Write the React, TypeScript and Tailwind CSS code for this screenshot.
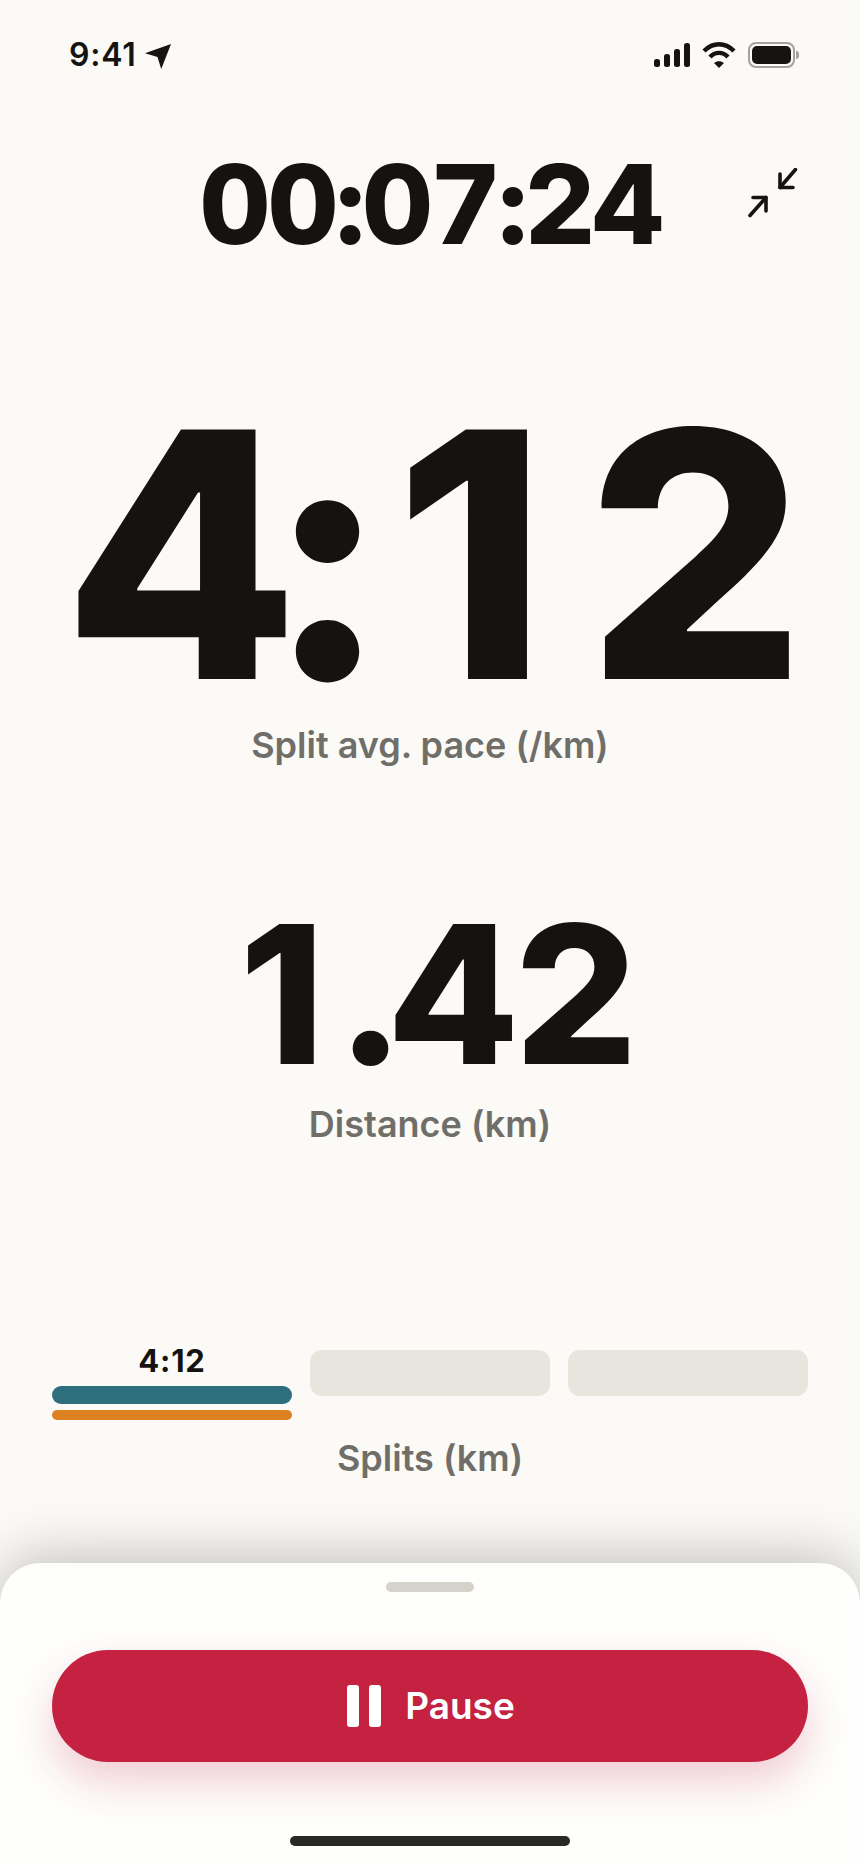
// App.tsx
import React from 'react';

const font = { inter: 'font-["Inter",sans-serif]' };

function StatusBar() {
  return (
    <div className="flex h-[46px] items-center justify-between pl-[69px] pr-[61px] mt-[32px]">
      <div className="flex items-center gap-[8px]">
        <span className="text-[32px] leading-[46px] font-semibold text-[#151412] tracking-[0.8px]">9:41</span>
        <svg width="26" height="26" viewBox="0 0 24 24" className="mt-[1px]">
          <path d="M24 1 L15 24 L11.5 13 L0 9.5 Z" fill="#151412" />
        </svg>
      </div>
      <div className="flex items-center gap-[12px]">
        <svg width="37" height="24" viewBox="0 0 37 24" fill="#151412">
          <rect x="1" y="16" width="6" height="8" rx="2.5" />
          <rect x="11" y="11" width="6" height="13" rx="2.5" />
          <rect x="21" y="6" width="6" height="18" rx="2.5" />
          <rect x="31" y="0" width="6" height="24" rx="2.5" />
        </svg>
        <svg width="34" height="26" viewBox="0 0 34 26" fill="none" stroke="#151412" strokeWidth="4.4">
          <path d="M2 9 C11 0 23 0 32 9" />
          <path d="M8 15 C13 9.500 21 9.500 26 15" />
          <path d="M12 21 L17 26 L22 21 C19 18.500 15 18.500 12 21 Z" fill="#151412" stroke="none" />
        </svg>
        <div className="flex items-center">
          <div className="h-[26px] w-[47px] rounded-[8px] border-2 border-[#a3a29e] p-[2px]">
            <div className="h-full w-full rounded-[5px] bg-[#151412]" />
          </div>
          <div className="ml-[1px] h-[8px] w-[3px] rounded-r-full bg-[#a3a29e]" />
        </div>
      </div>
    </div>
  );
}

function CollapseIcon() {
  return (
    <svg width="50" height="50" viewBox="0 0 50 50" fill="none" stroke="#151412" strokeWidth="3.6" strokeLinecap="round" strokeLinejoin="round">
      <path d="M47.500 1.500 L32 19.500" />
      <path d="M32 6 V19.500 H45" />
      <path d="M2 47.500 L18 29.500" />
      <path d="M5 29.500 H18 V43" />
    </svg>
  );
}

function Metric({ children, label, valueClass, labelClass }: { children: React.ReactNode; label: string; valueClass: string; labelClass: string }) {
  return (
    <div className="flex flex-col items-center">
      <div className={`font-extrabold text-[#141310] ${valueClass}`}>{children}</div>
      <div className={`text-[36px] leading-[44px] font-semibold text-[#6f6e69] ${labelClass}`}>{label}</div>
    </div>
  );
}

export default function App() {
  return (
    <div className={`relative flex h-[1864px] w-[860px] flex-col overflow-hidden bg-[#fbfaf6] ${font.inter}`}>
      <StatusBar />

      <div className="mt-[76px] grid grid-cols-[1fr_auto_1fr]">
        <div />
        <div className="text-[110px] leading-[100px] font-extrabold tabular-nums tracking-[-3px] text-[#141310]">00:07:24</div>
        <div className="flex justify-end pr-[62px] pt-[14px]">
          <CollapseIcon />
        </div>
      </div>

      {/* digits are spaced by hand, the reference has monospaced figures with a plain 1 */}
      <Metric
        label="Split avg. pace (/km)"
        valueClass="mt-[141px] text-[343px] leading-[320px] tracking-[-8px]"
        labelClass="mt-[8px]"
      >
        <span className="mr-[-24px]">4</span>
        <span className="mr-[15px]">:</span>
        <span className="mr-[48px]">1</span>
        2
      </Metric>
      <Metric
        label="Distance (km)"
        valueClass="mt-[132px] pl-[12px] text-[193px] leading-[190px] tracking-[-5px]"
        labelClass="mt-[13px]"
      >
        <span className="mr-[17px]">1</span>
        <span className="mr-[-13px]">.</span>
        <span className="mr-[0px]">4</span>
        2
      </Metric>

      <div className="mt-[204px] grid grid-cols-3 gap-[18px] px-[52px]">
        <div className="flex flex-col">
          <div className="text-center text-[31px] leading-[22px] font-bold tracking-[0.8px] text-[#141310]">4:12</div>
          <div className="mt-[14px] h-[18px] rounded-full bg-[#2e6f7e]" />
          <div className="mt-[6px] h-[10px] rounded-full bg-[#dc8221]" />
        </div>
        <div className="h-[46px] rounded-[12px] bg-[#e6e5de]" />
        <div className="h-[46px] rounded-[12px] bg-[#e6e5de]" />
      </div>

      <div className="mt-[16px] text-center text-[36px] leading-[44px] font-semibold text-[#6f6e69]">Splits (km)</div>

      <div className="mt-auto flex h-[301px] flex-col items-center rounded-t-[40px] bg-[#fefefd] px-[52px] pt-[19px] shadow-[0_-6px_56px_rgba(0,0,0,0.24)]">
        <div className="h-[10px] w-[88px] rounded-full bg-[#d4d2cb]" />
        <button
          type="button"
          className="mt-[58px] flex h-[112px] w-full shrink-0 items-center justify-center gap-[24px] rounded-full bg-[#c42240] pl-[2px] text-[37px] font-semibold text-white shadow-[0_20px_40px_rgba(196,34,64,0.22)]"
        >
          <span className="flex gap-[10px]">
            <span className="h-[42px] w-[12px] rounded-[3px] bg-white" />
            <span className="h-[42px] w-[12px] rounded-[3px] bg-white" />
          </span>
          Pause
        </button>
        <div className="mt-[74px] h-[10px] w-[280px] shrink-0 rounded-full bg-[#2a2826]" />
      </div>
    </div>
  );
}
